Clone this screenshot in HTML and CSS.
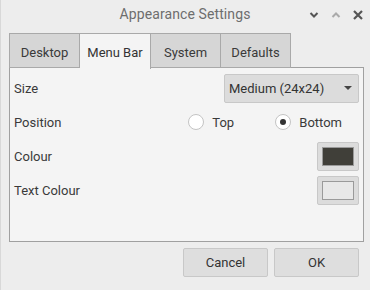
FILE: index.html
```html
<!DOCTYPE html>
<html>
<head>
<meta charset="utf-8">
<link rel="stylesheet" href="styles.css">
</head>
<body>
<div class="window">
  <div class="titlebar">
    <span class="title">Appearance Settings</span>
    <div class="wm">
      <svg class="wm-btn" width="10" height="10" viewBox="0 0 10 10"><path d="M1.5 3 L5 6.5 L8.5 3" fill="none" stroke="#555" stroke-width="2"/></svg>
      <svg class="wm-btn" width="10" height="10" viewBox="0 0 10 10"><path d="M1.5 7 L5 3.5 L8.5 7" fill="none" stroke="#aaa" stroke-width="2"/></svg>
      <svg class="wm-btn" width="10" height="10" viewBox="0 0 10 10"><path d="M1 1 L9 9 M9 1 L1 9" fill="none" stroke="#555" stroke-width="2.2"/></svg>
    </div>
  </div>
  <div class="tabs">
    <div class="tab">Desktop</div>
    <div class="tab active">Menu Bar</div>
    <div class="tab">System</div>
    <div class="tab">Defaults</div>
  </div>
  <div class="panel">
    <div class="row">
      <span class="label">Size</span>
      <div class="combo"><span>Medium (24x24)</span><svg width="8" height="5" viewBox="0 0 8 5"><path d="M0 0 L8 0 L4 4 Z" fill="#444"/></svg></div>
    </div>
    <div class="row">
      <span class="label">Position</span>
      <div class="radios">
        <label class="radio r-top"><span class="circle"></span>Top</label>
        <label class="radio"><span class="circle checked"></span>Bottom</label>
      </div>
    </div>
    <div class="row">
      <span class="label">Colour</span>
      <div class="colorbtn"><span class="swatch dark"></span></div>
    </div>
    <div class="row">
      <span class="label">Text Colour</span>
      <div class="colorbtn"><span class="swatch light"></span></div>
    </div>
  </div>
  <div class="buttons">
    <div class="btn">Cancel</div>
    <div class="btn">OK</div>
  </div>
</div>
</body>
</html>
```
FILE: styles.css
```css
html, body {
  margin: 0;
  padding: 0;
}
body {
  width: 370px;
  height: 290px;
  overflow: hidden;
  background: #ededed;
  font-family: Roboto, "Liberation Sans", sans-serif;
  font-size: 13px;
  color: #3a3a3a;
}
.window {
  width: 369px;
  height: 290px;
  border-left: 1px solid #d8d8d8;
  box-sizing: border-box;
}
.titlebar {
  height: 33px;
  position: relative;
  display: flex;
  justify-content: center;
  align-items: flex-start;
}
.title {
  margin-top: 6px;
  font-size: 14px;
  color: #6e6e6e;
  letter-spacing: 0.1px;
}
.wm {
  position: absolute;
  right: 6px;
  top: 10px;
  display: flex;
  gap: 12px;
}
.wm-btn {
  display: block;
}
.tabs {
  display: flex;
  margin-left: 8px;
  height: 35px;
}
.tab {
  box-sizing: border-box;
  height: 35px;
  border: 1px solid #a9a9a9;
  border-bottom: none;
  border-left: none;
  background: #d6d6d6;
  display: flex;
  align-items: flex-start;
  justify-content: center;
  padding-top: 11px;
}
.tab:first-child {
  border-left: 1px solid #a9a9a9;
  width: 71px;
  border-bottom: 1px solid #a9a9a9;
}
.tab:nth-child(2) { width: 71px; }
.tab:nth-child(3) { width: 70px; border-bottom: 1px solid #a9a9a9; }
.tab:nth-child(4) { width: 70px; border-bottom: 1px solid #a9a9a9; }
.tab.active {
  background: #f4f4f4;
  height: 36px;
  position: relative;
  z-index: 1;
  color: #333;
}
.panel {
  box-sizing: border-box;
  margin-left: 8px;
  width: 355px;
  height: 175px;
  margin-top: -1px;
  border: 1px solid #a0a0a0;
  background: #f4f4f4;
  padding: 3px 4px 0 4px;
  display: flex;
  flex-direction: column;
}
.row {
  height: 34px;
  display: flex;
  align-items: center;
  justify-content: space-between;
}
.label {
  color: #3a3a3a;
}
.combo {
  box-sizing: border-box;
  width: 135px;
  height: 29px;
  border: 1px solid #c8c8c8;
  background: #dcdcdc;
  border-radius: 2px;
  display: flex;
  align-items: center;
  justify-content: space-between;
  padding: 0 6px 0 4px;
  color: #333;
}
.combo svg { display: block; margin-top: 1px; }
.radios {
  display: flex;
  align-items: center;
  margin-right: 17px;
}
.radio {
  display: flex;
  align-items: center;
  gap: 8px;
}
.r-top { width: 87px; }
.circle {
  box-sizing: border-box;
  width: 16px;
  height: 16px;
  border-radius: 50%;
  border: 1px solid #c4c4c4;
  background: #fff;
  display: flex;
  align-items: center;
  justify-content: center;
}
.circle.checked::after {
  content: "";
  width: 6px;
  height: 6px;
  border-radius: 50%;
  background: #333;
}
.colorbtn {
  box-sizing: border-box;
  width: 42px;
  height: 29px;
  border: 1px solid #c8c8c8;
  background: #dcdcdc;
  border-radius: 2px;
  display: flex;
  align-items: center;
  justify-content: center;
}
.swatch {
  box-sizing: border-box;
  width: 32px;
  height: 19px;
  border: 1px solid #9a9a9a;
}
.swatch.dark { background: #403f39; }
.swatch.light { background: #e8e8e8; }
.buttons {
  display: flex;
  justify-content: flex-end;
  gap: 6px;
  margin-top: 6px;
  padding-right: 10px;
}
.btn {
  box-sizing: border-box;
  width: 85px;
  height: 29px;
  border: 1px solid #c8c8c8;
  background: #dedede;
  border-radius: 2px;
  display: flex;
  align-items: center;
  justify-content: center;
  color: #333;
}
```
